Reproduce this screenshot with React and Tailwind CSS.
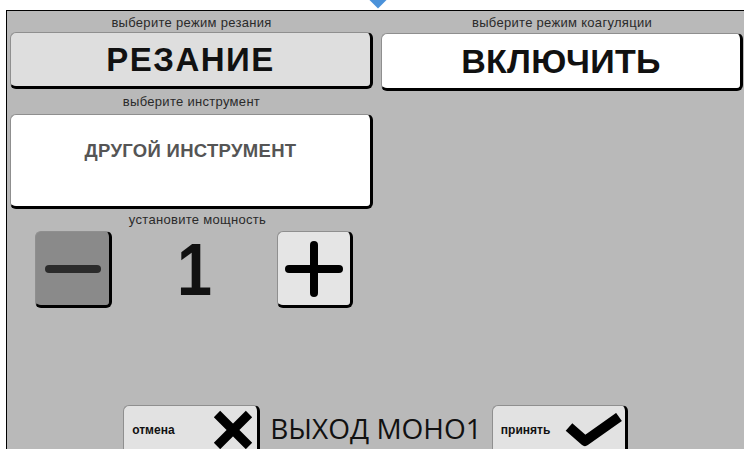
import React from 'react';

// кнопка с "объёмной" тенью снизу и справа
const Key = ({ className = '', children }) => (
  <div
    className={`flex rounded-[6px] border border-[#8f8f8f] border-b-[3px] border-r-[3px] border-b-black border-r-black ${className}`}
  >
    {children}
  </div>
);

const Caption = ({ className = 'h-[21px]', children }) => (
  <div className={`flex items-center justify-center text-[13px] leading-none text-[#2a2a2a] tracking-[0.3px] ${className}`}>
    {children}
  </div>
);

const CrossIcon = () => (
  <svg width="40" height="40" viewBox="0 0 40 40">
    <path d="M4 4 L36 36 M36 4 L4 36" stroke="#000" strokeWidth="9" />
  </svg>
);

const CheckIcon = () => (
  <svg width="58" height="34" viewBox="0 0 58 34">
    <path d="M4 14 L20 28 L54 4" stroke="#000" strokeWidth="10" fill="none" strokeLinejoin="round" />
  </svg>
);

export default function App() {
  return (
    <div
      className="w-[744px] h-[449px] bg-white flex flex-col overflow-hidden relative"
      style={{ fontFamily: '"Liberation Sans", Arial, sans-serif' }}
    >
      {/* верхняя полоса с маркером */}
      <div className="h-[10px] relative">
        <div className="absolute left-[372px] top-[-6px] w-[12px] h-[12px] rotate-45 bg-[#4b92da]" />
      </div>

      <div className="flex-1 ml-[6px] border-l border-t border-black bg-[#b9b9b9] flex flex-col min-h-0">
        <div className="flex pl-[3px] gap-[8px]">
          {/* левая колонка */}
          <div className="w-[363px] flex flex-col">
            <Caption className="h-[21px] pt-[1px]">выберите режим резания</Caption>
            <Key className="h-[57px] bg-[#dedede] items-center justify-center">
              <span className="text-[33px] font-bold tracking-[1.5px] text-[#111]">РЕЗАНИЕ</span>
            </Key>
            <Caption className="h-[25px]">выберите инструмент</Caption>
            <Key className="h-[95px] bg-white justify-center pt-[22px]">
              <span className="text-[18.5px] font-bold text-[#555] tracking-[0.3px]">ДРУГОЙ ИНСТРУМЕНТ</span>
            </Key>
            <Caption className="h-[21px] pl-[12px]">установите мощность</Caption>
            <div className="flex items-center pl-[25px] mt-[1px]">
              <Key className="w-[77px] h-[77px] bg-[#8a8a8a] items-center justify-center">
                <div className="w-[56px] h-[8px] rounded-full bg-[#2b2b2b]" />
              </Key>
              <div className="w-[165px] text-center text-[74px] font-bold leading-none text-[#111] scale-x-[0.85]">1</div>
              <Key className="w-[76px] h-[77px] bg-[#e5e5e5] items-center justify-center relative">
                <div className="w-[58px] h-[8px] rounded-full bg-black" />
                <div className="absolute w-[8px] h-[56px] rounded-full bg-black" />
              </Key>
            </div>
          </div>

          {/* правая колонка */}
          <div className="w-[362px] flex flex-col">
            <Caption className="h-[22px] pt-[1px]">выберите режим коагуляции</Caption>
            <Key className="h-[58px] bg-white items-center justify-center">
              <span className="text-[34px] font-bold tracking-[0.3px] text-[#111]">ВКЛЮЧИТЬ</span>
            </Key>
          </div>
        </div>

        {/* нижняя панель */}
        <div className="mt-auto flex justify-center items-start gap-[10px] mb-[-6px]">
          <Key className="w-[137px] h-[50px] bg-[#e2e2e2] items-center justify-between pl-[8px] pr-[4px] pt-[2px]">
            <span className="text-[12px] font-bold text-[#111]">отмена</span>
            <CrossIcon />
          </Key>
          <div
            className="text-[28px] leading-none text-[#111] pt-[9px]"
            style={{ fontFamily: '"Open Sans", sans-serif' }}
          >
            ВЫХОД МОНО1
          </div>
          <Key className="w-[136px] h-[50px] bg-[#e2e2e2] items-center justify-between pl-[8px] pr-[2px] pt-[2px]">
            <span className="text-[12px] font-bold text-[#111]">принять</span>
            <CheckIcon />
          </Key>
        </div>
      </div>
    </div>
  );
}
